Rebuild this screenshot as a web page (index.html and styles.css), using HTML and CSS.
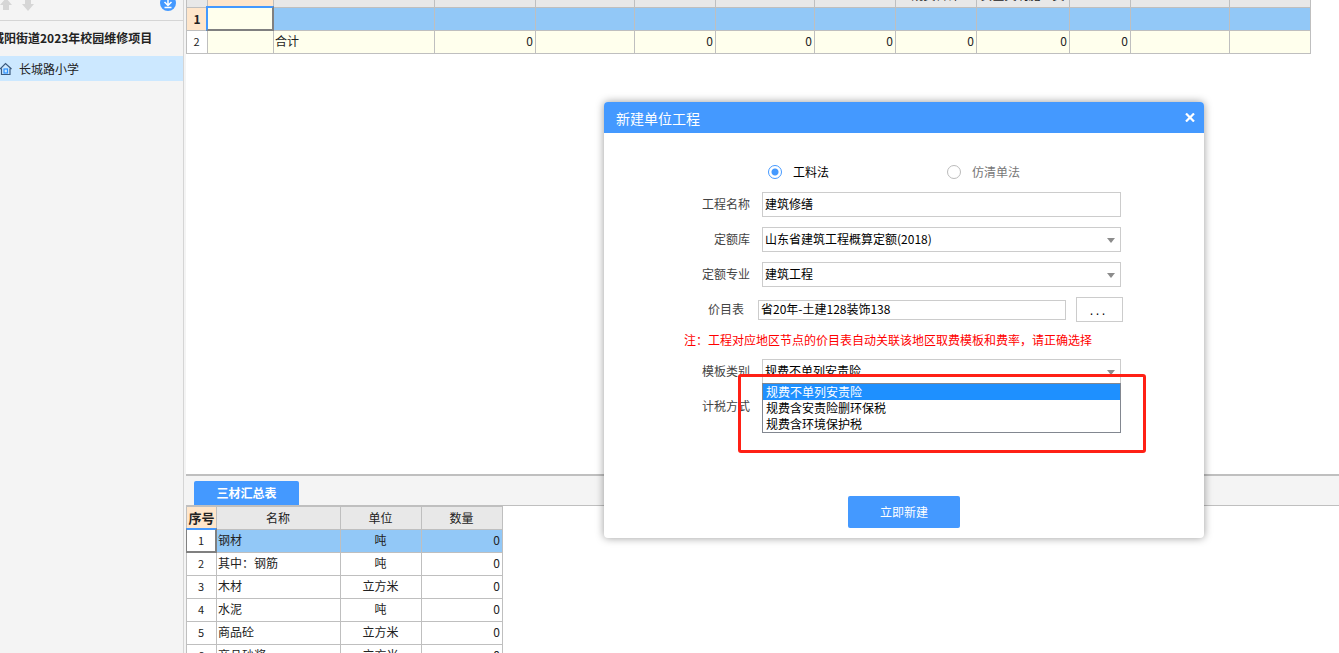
FILE: index.html
```html
<!DOCTYPE html>
<html lang="zh-CN">
<head>
<meta charset="utf-8">
<title>新建单位工程</title>
<link rel="stylesheet" href="styles.css">
</head>
<body>
<div class="app">
  <nav class="sidebar">
    <div class="toolbar">
      <svg class="tool-arrow" width="12" height="16" viewBox="0 0 12 16"><path d="M6 3L12 10H9V15H3V10H0Z" fill="#d6d6d6"/></svg>
      <svg class="tool-arrow" width="12" height="16" viewBox="0 0 12 16"><path d="M3 3H9V9H12L6 16L0 9H3Z" fill="#d6d6d6"/></svg>
      <svg class="tool-download" width="16" height="16" viewBox="0 0 16 16"><circle cx="8" cy="8" r="8" fill="#4499ff"/><path d="M8 3V10M4.500 7L8 10.500L11.500 7M4.500 12.500H11.500" fill="none" stroke="#fff" stroke-width="1.500"/></svg>
    </div>
    <h1 class="project">城阳街道2023年校园维修项目</h1>
    <a class="node" href="#school">
      <svg width="13" height="14" viewBox="0 0 13 14"><path d="M0 7L5.500 1.500L11.500 7M1.500 6.500V12.500H10V6.500" fill="none" stroke="#3c5a7d" stroke-width="1.200"/><rect x="4" y="7" width="3.500" height="4" fill="none" stroke="#2b91ff" stroke-width="1.200"/></svg>
      <span>长城路小学</span>
    </a>
  </nav>

  <main class="main">
    <section class="upper">
      <table class="grid cost">
        <colgroup><col class="w21"><col class="w66"><col class="w161"><col class="w101"><col class="w99"><col class="w81"><col class="w99"><col class="w81"><col class="w81"><col class="w93"><col class="w61"><col class="w99"><col class="w81"></colgroup>
        <thead>
          <tr><th></th><th class="active-head"></th><th></th><th></th><th></th><th></th><th></th><th></th><th>规费合计</th><th>安全文明施工费</th><th></th><th></th><th></th></tr>
        </thead>
        <tbody>
          <tr class="selected"><th class="active-head">1</th><td class="current"></td><td></td><td></td><td></td><td></td><td></td><td></td><td></td><td></td><td></td><td></td><td></td></tr>
          <tr class="total"><th class="row-no">2</th><td></td><td class="name">合计</td><td>0</td><td></td><td>0</td><td>0</td><td>0</td><td>0</td><td>0</td><td>0</td><td></td><td></td></tr>
        </tbody>
      </table>
    </section>

    <section class="lower">
      <div class="tabs"><button class="tab" type="button">三材汇总表</button></div>
      <table class="grid materials">
        <colgroup><col class="w30"><col class="w124"><col class="w81"><col class="w81"></colgroup>
        <thead><tr><th class="active-head">序号</th><th>名称</th><th>单位</th><th>数量</th></tr></thead>
        <tbody>
          <tr class="selected"><td class="row-no current">1</td><td class="name">钢材</td><td class="unit">吨</td><td>0</td></tr>
          <tr><td class="row-no">2</td><td class="name">其中：钢筋</td><td class="unit">吨</td><td>0</td></tr>
          <tr><td class="row-no">3</td><td class="name">木材</td><td class="unit">立方米</td><td>0</td></tr>
          <tr><td class="row-no">4</td><td class="name">水泥</td><td class="unit">吨</td><td>0</td></tr>
          <tr><td class="row-no">5</td><td class="name">商品砼</td><td class="unit">立方米</td><td>0</td></tr>
          <tr><td class="row-no">6</td><td class="name">商品砂浆</td><td class="unit">立方米</td><td>0</td></tr>
        </tbody>
      </table>
    </section>
  </main>
</div>

<div class="dialog" role="dialog" aria-labelledby="dialog-title">
  <header class="dialog-head">
    <h2 id="dialog-title">新建单位工程</h2>
    <button class="close" type="button" aria-label="关闭"><svg width="10" height="9" viewBox="0 0 10 9"><path d="M1 0.500L9 8.500M9 0.500L1 8.500" stroke="#fff" stroke-width="2.200"/></svg></button>
  </header>
  <form class="form">
    <div class="methods">
      <label class="method"><input type="radio" name="method" checked>工料法</label>
      <label class="method muted"><input type="radio" name="method">仿清单法</label>
    </div>
    <div class="row">
      <label for="pname">工程名称</label>
      <input class="box" id="pname" type="text" value="建筑修缮">
    </div>
    <div class="row">
      <label for="quota">定额库</label>
      <div class="pick"><select class="box" id="quota"><option>山东省建筑工程概算定额(2018)</option></select></div>
    </div>
    <div class="row">
      <label for="major">定额专业</label>
      <div class="pick"><select class="box" id="major"><option>建筑工程</option></select></div>
    </div>
    <div class="row price">
      <label for="price">价目表</label>
      <input class="box" id="price" type="text" value="省20年-土建128装饰138">
      <button class="browse" type="button" aria-label="选择价目表">...</button>
    </div>
    <p class="note">注：工程对应地区节点的价目表自动关联该地区取费模板和费率，请正确选择</p>
    <div class="row">
      <label for="template">模板类别</label>
      <div class="pick">
        <select class="box" id="template"><option>规费不单列安责险</option></select>
        <ul class="options" role="listbox" aria-label="模板类别">
          <li class="on" role="option" aria-selected="true">规费不单列安责险</li>
          <li role="option">规费含安责险删环保税</li>
          <li role="option">规费含环境保护税</li>
        </ul>
      </div>
    </div>
    <div class="row">
      <label for="tax">计税方式</label>
      <div class="pick"><select class="box" id="tax"></select></div>
    </div>
    <button class="submit" type="button">立即新建</button>
  </form>
  <div class="marker"></div>
</div>
</body>
</html>
```
FILE: styles.css
```css
* { box-sizing: border-box; }

body {
  margin: 0;
  overflow: hidden;
  background: #fff;
  color: #222;
  font: 12px/16px "Noto Sans CJK SC", sans-serif;
}

button, input, select { font: inherit; color: inherit; margin: 0; }

.app { display: flex; height: 100vh; background: #f4f4f4; }

/* Project tree */
.sidebar { flex: 0 0 184px; border-right: 1px solid #d5d5d5; overflow: hidden; }
.toolbar {
  display: flex;
  gap: 10px;
  height: 21px;
  padding-right: 7px;
  border-bottom: 1px solid #d5d5d5;
}
.tool-arrow { margin-top: -5px; }
.tool-download { margin: -5px 0 0 auto; }
.project {
  margin: 0 0 0 -8px;
  padding-bottom: 2px;
  font-size: 12px;
  line-height: 33px;
  font-weight: 700;
  white-space: nowrap;
}
.node {
  display: flex;
  align-items: center;
  gap: 6px;
  height: 25px;
  background: #cce8ff;
  color: #222;
  text-decoration: none;
}

/* Grids */
.main { flex: 1; min-width: 0; margin-left: 2px; display: flex; flex-direction: column; background: #fff; }
.upper { flex: 1; min-height: 0; overflow: hidden; }
.lower { flex: 0 0 179px; overflow: hidden; border-top: 2px solid #bfbfbf; }

.grid {
  table-layout: fixed;
  width: 0;
  border-collapse: separate;
  border-spacing: 0;
  border-left: 1px solid #bfbfbf;
}
.grid th, .grid td {
  position: relative;
  height: 23px;
  padding: 0 2px 2px 1px;
  border: solid #bfbfbf;
  border-width: 0 1px 1px 0;
  line-height: 16px;
  white-space: nowrap;
  font-weight: 400;
}
.grid td { text-align: right; }
.grid thead th { background: #e8e8e8; }
.grid .name { text-align: left; }
.grid .unit, .grid .row-no { text-align: center; }
.grid .row-no { background: #fff; font-size: 11px; }
.grid .active-head { background: #ffe6cb; font-weight: 700; padding: 0; }
.grid .selected td { background: #92c8f7; }
.cost { margin-top: -15px; }
.cost td.current, .cost .total td { background: #ffffed; }
.materials { border-top: 1px solid #bfbfbf; }
.materials thead th { padding-bottom: 0; }
.materials thead .active-head { font-size: 13px; }
.materials .selected td.current { background: #fff; }
.current::after {
  content: "";
  position: absolute;
  inset: -2px -1px -1px -2px;
  border: 2px solid #808080;
  border-top-color: #4499ff;
  border-left-color: #4499ff;
}
.materials .current::after { left: -1px; border-left: 1px solid #808080; }

.w21 { width: 21px; }
.w30 { width: 30px; }
.w61 { width: 61px; }
.w66 { width: 66px; }
.w81 { width: 81px; }
.w93 { width: 93px; }
.w99 { width: 99px; }
.w101 { width: 101px; }
.w124 { width: 124px; }
.w161 { width: 161px; }

.tabs {
  display: flex;
  align-items: flex-end;
  height: 30px;
  padding-left: 8px;
  background: #f4f4f4;
  border-bottom: 1px solid #bfbfbf;
}
.tab {
  width: 105px;
  height: 24px;
  padding: 0;
  border: 0;
  border-radius: 2px 2px 0 0;
  background: #4499ff;
  color: #fff;
  font-weight: 700;
}

/* Dialog window */
.dialog {
  position: absolute;
  left: 604px;
  top: 102px;
  width: 600px;
  border-radius: 4px;
  background: #fff;
  box-shadow: 0 0 8px rgba(0, 0, 0, 0.4);
}
.dialog-head {
  display: flex;
  align-items: center;
  justify-content: space-between;
  height: 31px;
  padding: 0 9px 0 12px;
  border-radius: 4px 4px 0 0;
  background: #4499ff;
  color: #fff;
}
.dialog-head h2 { margin: 0; font-size: 14px; font-weight: 400; }
.close { display: flex; padding: 0; border: 0; background: none; }

.form { display: flex; flex-direction: column; gap: 10px; padding: 29px 0 10px; }
.methods { display: grid; grid-template-columns: 179px auto; height: 20px; padding-left: 164px; color: #000; }
.method { display: flex; align-items: center; gap: 11px; }
.muted { color: #777; }
.method input {
  appearance: none;
  width: 14px;
  height: 14px;
  border: 1px solid #bbb;
  border-radius: 50%;
}
.method input:checked { border-color: #4499ff; background: radial-gradient(circle, #4499ff 3px, #fff 4px); }

.row { display: flex; align-items: center; gap: 12px; height: 25px; padding-right: 83px; }
.row label { flex: 0 0 146px; padding-bottom: 2px; text-align: right; color: #444; }
.box {
  display: block;
  flex: 1;
  min-width: 0;
  width: 100%;
  height: 25px;
  padding: 0 2px 2px;
  border: 1px solid #ccc;
  border-radius: 0;
  background: #fff;
  color: #000;
  appearance: none;
}
.pick { position: relative; flex: 1; }
.pick::after {
  content: "";
  position: absolute;
  right: 6px;
  top: 11px;
  border: solid transparent;
  border-width: 5px 4px 0;
  border-top-color: #8c8c8c;
}
.price { padding-right: 81px; gap: 10px; }
.price label { flex-basis: 140px; margin-right: 4px; }
.price .box { height: 20px; }
.browse {
  width: 47px;
  height: 25px;
  padding: 5px 4px 0 0;
  border: 1px solid #ccc;
  background: #fff;
  color: #000;
  font: 10px/12px "DejaVu Sans Mono", monospace;
}
.note { margin: 0; padding: 0 0 2px 80px; line-height: 15px; color: #f00; }
.options {
  position: absolute;
  z-index: 1;
  top: 24px;
  left: 0;
  right: 0;
  margin: 0;
  padding: 0;
  list-style: none;
  border: 1px solid #828790;
  background: #fff;
  color: #000;
}
.options li { padding: 0 3px; line-height: 16px; }
.options .on { background: #1e90ff; color: #fff; }
.submit {
  align-self: center;
  width: 112px;
  height: 32px;
  margin-top: 67px;
  border: 0;
  border-radius: 2px;
  background: #4499ff;
  color: #fff;
}
.marker {
  position: absolute;
  z-index: 2;
  left: 134px;
  top: 272px;
  width: 408px;
  height: 79px;
  border: 3px solid #ff2015;
  border-radius: 3px;
  pointer-events: none;
}
```
